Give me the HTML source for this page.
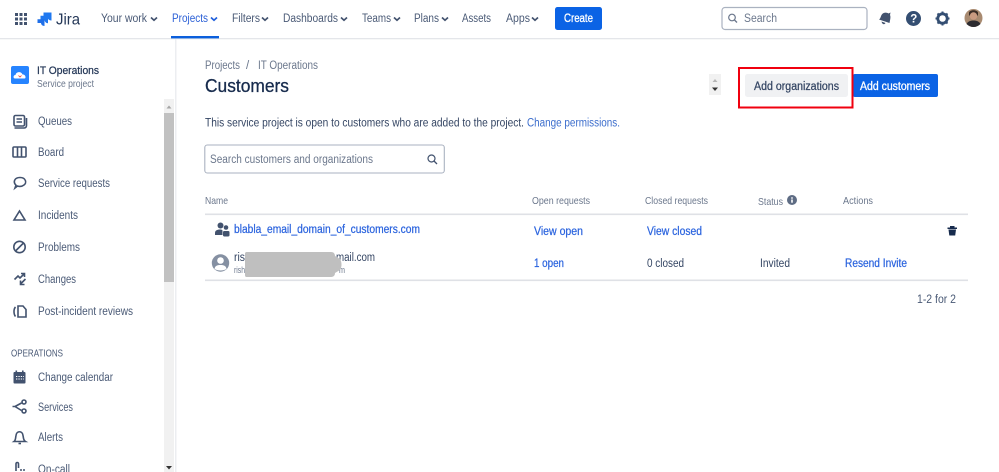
<!DOCTYPE html>
<html><head><meta charset="utf-8"><style>
html,body{margin:0;padding:0;width:999px;height:472px;overflow:hidden;background:#fff}
svg{display:block}
text{font-family:"Liberation Sans",sans-serif;font-size:11.5px;fill:#4a5a76}
.l{fill:#2a63de;stroke:#2a63de;stroke-width:.22;font-size:11.5px}
.g{fill:#6b778c}
.h{fill:#6b778c;font-size:10.5px}
.w{fill:#fff;stroke:#fff;stroke-width:.3}
.b{fill:#344563}
.i{fill:none;stroke:#42526e;stroke-width:1.6}
</style></head><body>
<svg width="999" height="472" viewBox="0 0 999 472" xmlns="http://www.w3.org/2000/svg">
<defs><path id="ch" d="M-3 -1.500L0 1.200L3 -1.500" fill="none" stroke-width="1.700"/></defs>
<!-- top nav -->
<rect x="0" y="38" width="999" height="1.300" fill="#e4e6ea"/>
<g fill="#42526e">
<rect x="15" y="13" width="3" height="3"/><rect x="19.500" y="13" width="3" height="3"/><rect x="24" y="13" width="3" height="3"/>
<rect x="15" y="17.500" width="3" height="3"/><rect x="19.500" y="17.500" width="3" height="3"/><rect x="24" y="17.500" width="3" height="3"/>
<rect x="15" y="22" width="3" height="3"/><rect x="19.500" y="22" width="3" height="3"/><rect x="24" y="22" width="3" height="3"/>
</g>
<path d="M43.500 12.500H51.500V20.500C49 20.500 47.500 19 47.500 16.500H43.500Z" fill="#1f78f0"/>
<path d="M40.500 15.800H48V23.300C46 23.300 44.500 21.500 44.500 19.800H40.500Z" fill="#1f78f0"/>
<path d="M37.500 19.200H44.500V26C42.500 26 41 24.500 41 23H37.500Z" fill="#1f6fe8"/>
<text x="56" y="24.500" textLength="24" lengthAdjust="spacingAndGlyphs" style="font-size:16px;fill:#253858">Jira</text>
<text x="101" y="22" textLength="46" lengthAdjust="spacingAndGlyphs">Your work</text>
<use href="#ch" x="154" y="19" stroke="#42526e"/>
<text x="172" y="22" textLength="36" lengthAdjust="spacingAndGlyphs" style="fill:#2a5fd6">Projects</text>
<use href="#ch" x="214" y="19" stroke="#1f5fdc"/>
<rect x="171" y="36" width="48" height="2.400" fill="#0b5fdc"/>
<text x="232" y="22" textLength="28" lengthAdjust="spacingAndGlyphs">Filters</text>
<use href="#ch" x="265" y="19" stroke="#42526e"/>
<text x="283" y="22" textLength="55" lengthAdjust="spacingAndGlyphs">Dashboards</text>
<use href="#ch" x="344" y="19" stroke="#42526e"/>
<text x="362" y="22" textLength="29" lengthAdjust="spacingAndGlyphs">Teams</text>
<use href="#ch" x="397" y="19" stroke="#42526e"/>
<text x="414" y="22" textLength="25" lengthAdjust="spacingAndGlyphs">Plans</text>
<use href="#ch" x="445" y="19" stroke="#42526e"/>
<text x="462" y="22" textLength="29" lengthAdjust="spacingAndGlyphs">Assets</text>
<text x="506" y="22" textLength="24" lengthAdjust="spacingAndGlyphs">Apps</text>
<use href="#ch" x="535" y="19" stroke="#42526e"/>
<rect x="555" y="7" width="47" height="23" rx="2.500" fill="#0b63e5"/>
<text x="564" y="22" textLength="29" lengthAdjust="spacingAndGlyphs" class="w">Create</text>
<rect x="722" y="7.500" width="145" height="22" rx="3" fill="#fff" stroke="#aab2c0" stroke-width="1.200"/>
<circle cx="732" cy="17.500" r="3.300" fill="none" stroke="#6b778c" stroke-width="1.200"/>
<path d="M734.500 20L737 22.500" stroke="#6b778c" stroke-width="1.300"/>
<text x="744" y="22" textLength="33" lengthAdjust="spacingAndGlyphs" class="g">Search</text>
<!-- right icons -->
<path d="M879 19.500C881 18.500 880.500 15.500 882.500 13.800C884.500 12 887 12.500 888.500 13.500L890.500 12.500L890 15C891 17 890 20 889.500 23Z M881.500 21.500L885.500 23C884.500 25 882 24.500 881.500 21.500Z" fill="#42526e"/>
<circle cx="913.500" cy="18.500" r="7.500" fill="#344e72"/>
<text x="910.300" y="22.500" style="font-size:11.500px;font-weight:bold;fill:#fff">?</text>
<circle cx="942.500" cy="18.500" r="4.700" fill="none" stroke="#344e72" stroke-width="2.800"/>
<path d="M942.500 11.500V25.500M935.500 18.500H949.500M937.500 13.500L947.500 23.500M947.500 13.500L937.500 23.500" stroke="#344e72" stroke-width="2" stroke-dasharray="2 10 2 0"/>
<circle cx="973.500" cy="18" r="9" fill="#a88a70"/>
<path d="M969 12.500C970 9.500 977 9.500 978 12.500L978 15.500H969Z" fill="#3a2c25"/>
<circle cx="973.500" cy="16" r="3.700" fill="#c99a80"/>
<path d="M966.500 24C968 21 971 20.500 973.500 20.500C976 20.500 979 21 980.500 24C976 28 971 28 966.500 24Z" fill="#2c2b30"/>
<!-- sidebar -->
<rect x="175" y="39" width="1.500" height="433" fill="#eceef1"/>
<rect x="164" y="99" width="10" height="373" fill="#f1f1f1"/>
<rect x="164" y="113" width="10" height="169" fill="#c1c1c1"/>
<path d="M166.500 108.500L169 105.500L171.500 108.500Z" fill="#a5a5a5"/>
<path d="M166 466L169 469.500L172 466Z" fill="#333"/>
<rect x="11" y="66" width="18" height="18" rx="2" fill="#2684ff"/>
<path d="M15 78.500C13 78.500 13 75 15.500 75C16 71.500 21.500 71 22.500 74.500C25.500 74 26.500 78.500 24.500 78.500Z" fill="#fff"/>
<path d="M18.500 75.500L20 77L21.500 75.500" fill="none" stroke="#e0453a" stroke-width=".8"/>
<text x="37" y="74" textLength="62" lengthAdjust="spacingAndGlyphs" style="font-size:11px;fill:#253858;stroke:#253858;stroke-width:.25">IT Operations</text>
<text x="37" y="87" textLength="57" lengthAdjust="spacingAndGlyphs" style="font-size:10px" class="g">Service project</text>
<!-- Queues icon -->
<rect x="14" y="115.500" width="10.500" height="10.500" rx="1.500" class="i"/>
<path d="M16.500 119H22M16.500 122H22M14.500 128H24C25.500 128 26.500 127 26.500 125.500V118" class="i" stroke-width="1.200"/>
<text x="38" y="125" textLength="34" lengthAdjust="spacingAndGlyphs">Queues</text>
<!-- Board -->
<rect x="13" y="147" width="13" height="10" rx="1" class="i"/>
<path d="M17.500 147V157M21.500 147V157" class="i"/>
<text x="38" y="156" textLength="26" lengthAdjust="spacingAndGlyphs">Board</text>
<!-- Service req -->
<path d="M15 188L16 185.200C13 182.500 14 177.500 20 177.500C26 177.500 27 183 24 185C22 186.500 19.500 186.800 17.500 186Z" class="i"/>
<text x="38" y="187" textLength="72" lengthAdjust="spacingAndGlyphs">Service requests</text>
<!-- Incidents -->
<path d="M19.500 211L25 220H14Z" class="i" stroke-width="1.900"/>
<text x="38" y="219" textLength="40" lengthAdjust="spacingAndGlyphs">Incidents</text>
<!-- Problems -->
<circle cx="19.500" cy="247" r="5.700" class="i" stroke-width="1.900"/>
<path d="M15.500 251L23.500 243" class="i" stroke-width="1.900"/>
<text x="38" y="251" textLength="42" lengthAdjust="spacingAndGlyphs">Problems</text>
<!-- Changes -->
<path d="M14.500 279.500L18 276L20 278L24.500 273.500M21 273.500H24.500V277" class="i" stroke-width="1.400"/>
<path d="M25.500 279L20.500 284M20.500 280.500V284.500H24.500" class="i" stroke-width="1.400"/>
<text x="38" y="283" textLength="38" lengthAdjust="spacingAndGlyphs">Changes</text>
<!-- Post-incident -->
<path d="M18 306H23L26 309.500V317H18Z" class="i"/>
<path d="M15.500 307C13.500 309 13.500 314 15.500 316.500" class="i"/>
<text x="38" y="315" textLength="95" lengthAdjust="spacingAndGlyphs">Post-incident reviews</text>
<text x="11" y="356.500" textLength="52" lengthAdjust="spacingAndGlyphs" style="font-size:10.500px">OPERATIONS</text>
<!-- calendar -->
<rect x="13.500" y="372" width="12" height="11.500" rx="1" fill="#42526e"/>
<rect x="15.500" y="370.500" width="1.600" height="3" fill="#42526e"/><rect x="22" y="370.500" width="1.600" height="3" fill="#42526e"/>
<path d="M16 376.500H24M16 379H24" stroke="#fff" stroke-width="1.100" stroke-dasharray="1.300 1.100"/>
<text x="38" y="381" textLength="75" lengthAdjust="spacingAndGlyphs">Change calendar</text>
<!-- services -->
<circle cx="24" cy="402" r="2" class="i" stroke-width="1.300"/>
<circle cx="24" cy="411" r="2" class="i" stroke-width="1.300"/>
<path d="M12.500 406.500H15M15 406.500L21.500 403M15 406.500L21.500 410.500" class="i" stroke-width="1.200"/>
<text x="38" y="411" textLength="35" lengthAdjust="spacingAndGlyphs">Services</text>
<!-- alerts -->
<path d="M14 441.500C16 440 15.500 437 16 435.500C16.500 430.500 22.500 430.500 23 435.500C23.500 437 23 440 25.500 441.500Z" class="i" stroke-width="1.400"/>
<path d="M18.500 443.500H21" class="i"/>
<text x="38" y="441" textLength="25" lengthAdjust="spacingAndGlyphs">Alerts</text>
<!-- on-call -->
<path d="M16 471V464C16 462 18.500 462 18.500 464V468" class="i" stroke-width="1.500"/>
<circle cx="21" cy="470" r="1" fill="#42526e"/><circle cx="24" cy="470" r="1" fill="#42526e"/>
<text x="38" y="473" textLength="32" lengthAdjust="spacingAndGlyphs">On-call</text>
<!-- main -->
<text x="205" y="69" textLength="35" lengthAdjust="spacingAndGlyphs" class="g">Projects</text>
<text x="246" y="69" class="g">/</text>
<text x="258" y="69" textLength="60" lengthAdjust="spacingAndGlyphs" class="g">IT Operations</text>
<text x="205" y="92" textLength="84" lengthAdjust="spacingAndGlyphs" style="font-size:18.500px;fill:#172b4d;stroke:#172b4d;stroke-width:.3">Customers</text>
<rect x="709" y="74" width="12" height="21" fill="#f1f1f1"/>
<path d="M712.500 82L715 79L717.500 82Z" fill="#b5b5b5"/>
<path d="M712 87.500L715 91L718 87.500Z" fill="#333"/>
<rect x="745" y="74" width="103" height="23" rx="2.500" fill="#f0f1f3"/>
<text x="754" y="90" textLength="85" lengthAdjust="spacingAndGlyphs" style="fill:#344563;stroke:#344563;stroke-width:.25">Add organizations</text>
<rect x="853" y="74" width="85" height="23" rx="2" fill="#0b63e5"/>
<text x="860" y="90" textLength="70" lengthAdjust="spacingAndGlyphs" class="w">Add customers</text>
<rect x="739" y="68" width="113.500" height="39.500" fill="none" stroke="#f0000f" stroke-width="2"/>
<text x="205" y="126.500" textLength="319" lengthAdjust="spacingAndGlyphs" style="fill:#344563">This service project is open to customers who are added to the project.</text>
<text x="527" y="126.500" textLength="93" lengthAdjust="spacingAndGlyphs" style="fill:#3a6ccc">Change permissions.</text>
<rect x="204.800" y="145" width="239.500" height="28" rx="2.500" fill="#fff" stroke="#aab2c0" stroke-width="1.100"/>
<text x="210" y="163" textLength="163" lengthAdjust="spacingAndGlyphs" class="g">Search customers and organizations</text>
<circle cx="431.500" cy="158.500" r="3.500" fill="none" stroke="#42526e" stroke-width="1.200"/>
<path d="M434 161L437 164" stroke="#42526e" stroke-width="1.300"/>
<text x="205" y="204" textLength="23" lengthAdjust="spacingAndGlyphs" class="h">Name</text>
<text x="532" y="204" textLength="58" lengthAdjust="spacingAndGlyphs" class="h">Open requests</text>
<text x="645" y="204" textLength="63" lengthAdjust="spacingAndGlyphs" class="h">Closed requests</text>
<text x="758" y="205" textLength="25" lengthAdjust="spacingAndGlyphs" class="h">Status</text>
<text x="843" y="204" textLength="30" lengthAdjust="spacingAndGlyphs" class="h">Actions</text>
<circle cx="792" cy="200" r="5" fill="#5e6c84"/>
<rect x="791.200" y="199.500" width="1.600" height="3.200" fill="#fff"/><rect x="791.200" y="197.300" width="1.600" height="1.400" fill="#fff"/>
<rect x="205" y="213.500" width="763" height="1.600" fill="#dfe1e6"/>
<!-- row1 -->
<circle cx="220.500" cy="225.500" r="3" fill="#42526e"/>
<circle cx="226" cy="227.500" r="2.300" fill="#42526e"/>
<path d="M215 235V233C215 230.500 217 229.500 220 229.500C222 229.500 222.500 230 222.500 231V235Z" fill="#42526e"/>
<rect x="223" y="231" width="6.500" height="5.500" rx="1.200" fill="#42526e"/>
<text x="234" y="233" textLength="186" lengthAdjust="spacingAndGlyphs" class="l">blabla_email_domain_of_customers.com</text>
<text x="534" y="235" textLength="49" lengthAdjust="spacingAndGlyphs" class="l">View open</text>
<text x="647" y="235" textLength="55" lengthAdjust="spacingAndGlyphs" class="l">View closed</text>
<path d="M947.500 227.500H957V229H947.500Z M950 226H954.500V227.500H950Z M948.500 229.500H956L955.200 235.500H949.300Z" fill="#172b4d"/>
<!-- row2 -->
<circle cx="220.500" cy="263" r="8.700" fill="#8590a2"/>
<circle cx="220.500" cy="260.500" r="3.300" fill="#fff"/>
<path d="M214.500 269C215 265.500 217.500 265 220.500 265C223.500 265 226 265.500 226.500 269C223 271 218 271 214.500 269Z" fill="#fff"/>
<text x="234" y="261" textLength="11" lengthAdjust="spacingAndGlyphs" class="b">ris</text>
<text x="336" y="261" textLength="39" lengthAdjust="spacingAndGlyphs" class="b">mail.com</text>
<text x="234" y="273" textLength="11" lengthAdjust="spacingAndGlyphs" class="g" style="font-size:9px">rish</text>
<text x="339" y="273" textLength="6" lengthAdjust="spacingAndGlyphs" class="g" style="font-size:9px">m</text>
<path d="M247 252H331C334 252 335 254 335 256L340 259C342 262 342 267 340 270L335 273C335 275 334 277 331 277H247C245 277 245 276 245 274V255C245 253 245 252 247 252Z" fill="#bfbfbf"/>
<text x="534" y="267" textLength="30" lengthAdjust="spacingAndGlyphs" class="l">1 open</text>
<text x="647" y="267" textLength="37" lengthAdjust="spacingAndGlyphs" class="b">0 closed</text>
<text x="760" y="267" textLength="30" lengthAdjust="spacingAndGlyphs" class="b">Invited</text>
<text x="845" y="267" textLength="62" lengthAdjust="spacingAndGlyphs" class="l">Resend Invite</text>
<rect x="205" y="279.500" width="763" height="1.600" fill="#dfe1e6"/>
<text x="917" y="303" textLength="39" lengthAdjust="spacingAndGlyphs">1-2 for 2</text>
</svg>
</body></html>
